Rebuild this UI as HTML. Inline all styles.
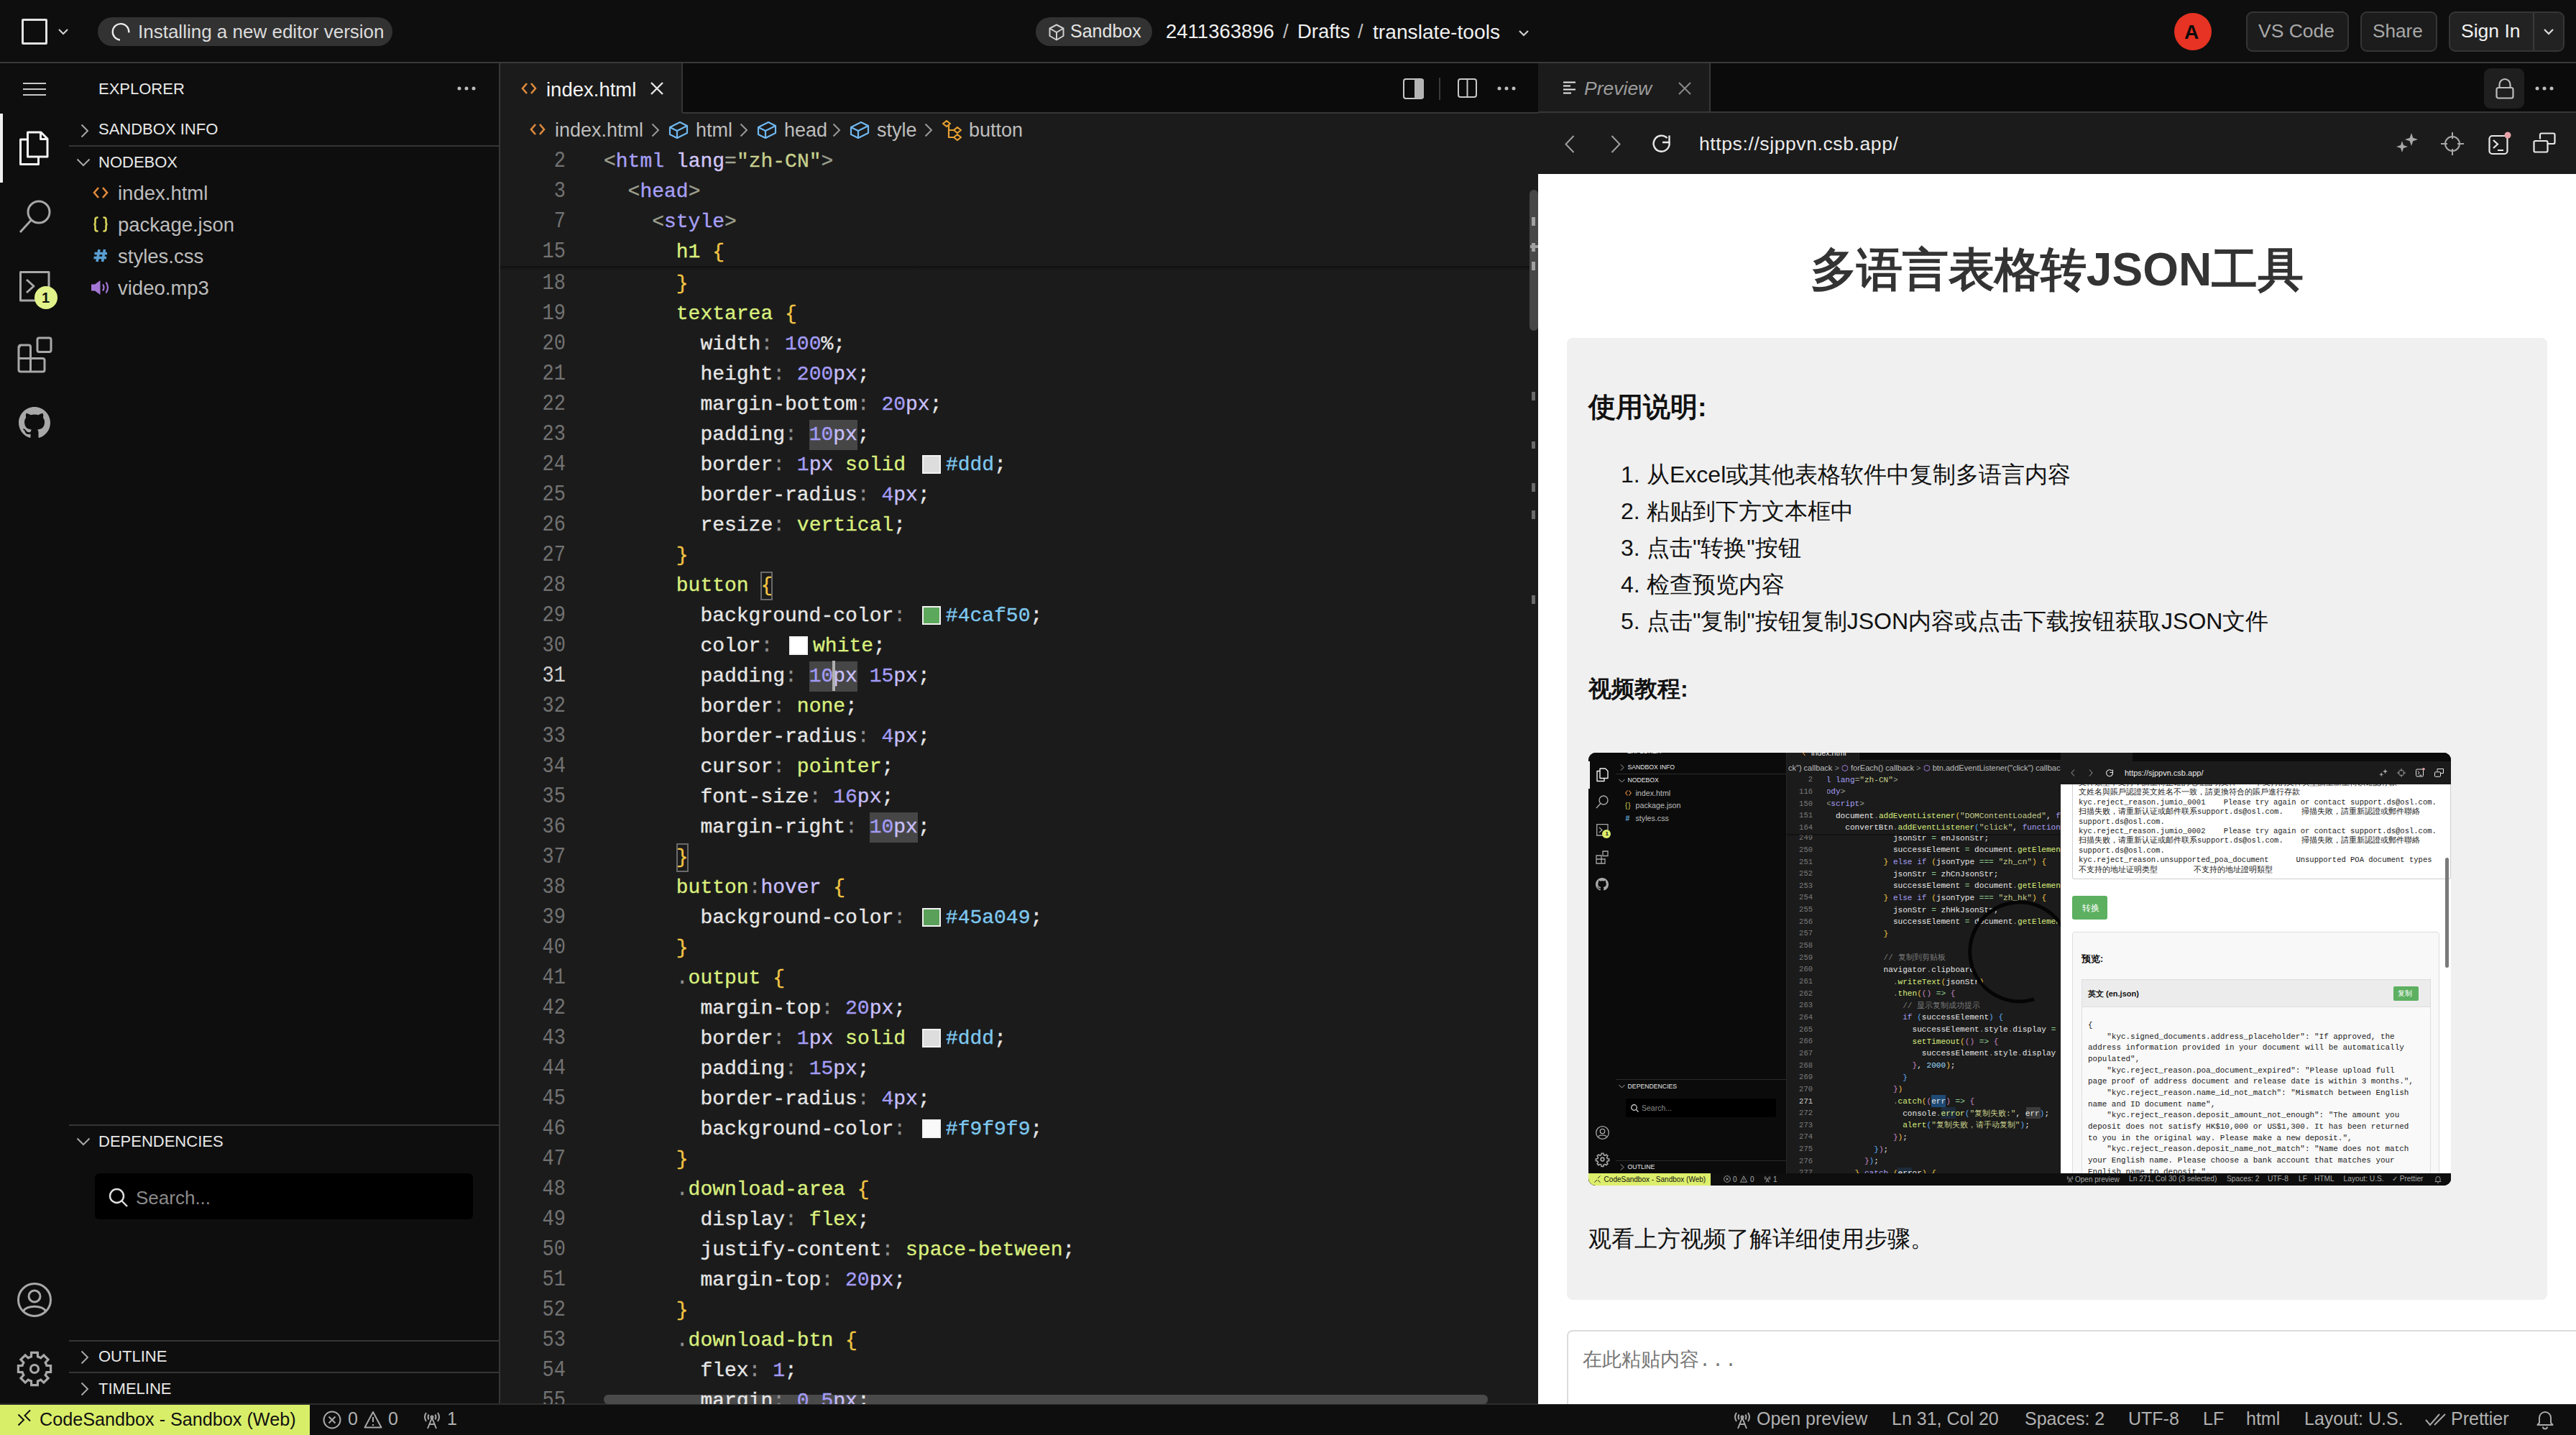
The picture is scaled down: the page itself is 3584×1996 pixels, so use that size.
<!DOCTYPE html>
<html><head><meta charset="utf-8">
<style>
*{box-sizing:border-box;margin:0;padding:0}
html,body{width:3584px;height:1996px;overflow:hidden;background:#0e0e0e;font-family:"Liberation Sans",sans-serif;color:#e6e6e6}
.a{position:absolute}
svg{position:absolute;overflow:visible}
.t{position:absolute;white-space:pre;line-height:1}
/* top bar */
#top{left:0;top:0;width:3584px;height:86px;background:#0e0e0e}
#topline{left:0;top:86px;width:3584px;height:2px;background:#3a3a3a}
.pill{position:absolute;background:#323232;border-radius:20px}
.btn{position:absolute;border:2px solid #353535;background:#1c1c1c;border-radius:9px}
/* activity */
#act{left:0;top:88px;width:96px;height:1865px;background:#0e0e0e}
/* sidebar */
#side{left:96px;top:88px;width:598px;height:1865px;background:#0e0e0e}
#sideline{left:694px;top:88px;width:2px;height:1865px;background:#363636}
.sep{position:absolute;height:2px;background:#353535}
.hdr{position:absolute;font-size:22px;color:#e8e8e8;letter-spacing:0}
.file{position:absolute;font-size:27.5px;color:#bdbdbd}
/* status */
#status{left:0;top:1952px;width:3584px;height:44px;background:#0e0e0e;border-top:2px solid #2c2c2c}
.st{position:absolute;font-size:25px;color:#b0b0b0;top:1961px;line-height:1}
/* editor */
#ed{left:696px;top:88px;width:1444px;height:1865px;background:#1b1b1b}
#tabs{left:696px;top:88px;width:1444px;height:69px;background:#0b0b0b}
.code{position:absolute;font-family:"Liberation Mono",monospace;font-size:28px;line-height:42px;white-space:pre;-webkit-text-stroke:0.35px currentColor}
.ln{position:absolute;font-family:"Liberation Mono",monospace;font-size:27px;transform:scaleY(1.13);transform-origin:50% 60%;line-height:42px;color:#727272;text-align:right;width:120px}
/* preview */
#pv{left:2140px;top:88px;width:1444px;height:1865px;background:#0b0b0b}
.pl{left:2255px;font-size:32px;color:#111}.pl b{font-weight:normal;display:inline-block;width:36px}
</style></head>
<body>
<div id="top" class="a"></div>
<div id="topline" class="a"></div>
<div id="act" class="a"></div>
<div id="side" class="a"></div>
<div id="sideline" class="a"></div>
<div id="ed" class="a"></div>
<div id="tabs" class="a"></div>
<div id="pv" class="a"></div>
<div id="status" class="a"></div>


<!-- ACTIVITY BAR -->
<svg style="left:32px;top:115px" width="32" height="20"><g stroke="#c8c8c8" stroke-width="2"><path d="M0 1H32M0 9H32M0 17H32"/></g></svg>
<div class="a" style="left:0;top:158px;width:4px;height:96px;background:#f0f0f0"></div>
<svg style="left:26px;top:182px" width="42" height="48"><g fill="none" stroke="#f4f4f4" stroke-width="3" stroke-linejoin="round"><path d="M12.5 12 H2.5 V46.5 H27.5 V36"/><path d="M12.5 2 H31 L40 11 V36 H12.5 Z"/><path d="M30.5 2 V11.5 H40"/></g></svg>
<svg style="left:26px;top:278px" width="46" height="48"><g fill="none" stroke="#a8a8a8" stroke-width="3"><circle cx="28" cy="17" r="15"/><path d="M17.5 28 L2 45"/></g></svg>
<svg style="left:27px;top:377px" width="44" height="44"><g fill="none" stroke="#a8a8a8" stroke-width="3" stroke-linejoin="round"><path d="M1.5 1.5 H41 V41 H1.5 Z"/><path d="M10 12 L20 21 L10 30"/></g></svg>
<div class="a" style="left:48px;top:398px;width:32px;height:32px;border-radius:50%;background:#e2f28a"></div>
<div class="t" style="left:58px;top:404px;font-size:20px;font-weight:bold;color:#111">1</div>
<svg style="left:24px;top:468px" width="50" height="52"><g fill="none" stroke="#a8a8a8" stroke-width="3" stroke-linejoin="round"><path d="M3.5 14 Q2 12 5 12 H16 Q18.5 12 18.5 14.5 V30.5 H35 Q38 30.5 38 33 V46.5 Q38 49 35.5 49 H5 Q2 49 2 46.5 V14 Z"/><path d="M2 30.5 H18.5 V49"/><rect x="28" y="2" width="19" height="19.5" rx="2.5"/></g></svg>
<svg style="left:26px;top:566px" width="44" height="44" viewBox="0 0 16 16"><path fill="#a8a8a8" d="M8 0C3.58 0 0 3.58 0 8c0 3.54 2.29 6.53 5.47 7.59.4.07.55-.17.55-.38 0-.19-.01-.82-.01-1.49-2.01.37-2.53-.49-2.69-.94-.09-.23-.48-.94-.82-1.13-.28-.15-.68-.52-.01-.53.63-.01 1.08.58 1.23.82.72 1.21 1.87.87 2.33.66.07-.52.28-.87.51-1.07-1.78-.2-3.64-.89-3.64-3.95 0-.87.31-1.59.82-2.15-.08-.2-.36-1.02.08-2.12 0 0 .67-.21 2.2.82.64-.18 1.32-.27 2-.27.68 0 1.36.09 2 .27 1.53-1.04 2.2-.82 2.2-.82.44 1.1.16 1.92.08 2.12.51.56.82 1.27.82 2.15 0 3.07-1.87 3.75-3.65 3.95.29.25.54.73.54 1.48 0 1.07-.01 1.93-.01 2.2 0 .21.15.46.55.38A8.013 8.013 0 0016 8c0-4.42-3.58-8-8-8z"/></svg>
<svg style="left:24px;top:1784px" width="48" height="48"><g fill="none" stroke="#a8a8a8" stroke-width="3"><circle cx="24" cy="24" r="22.5"/><circle cx="24" cy="19" r="8"/><path d="M8.5 40 C12 31 36 31 39.5 40"/></g></svg>
<svg style="left:24px;top:1880px" width="48" height="48"><g fill="none" stroke="#a8a8a8" stroke-width="3.2" stroke-linejoin="miter"><path d="M17.30 7.83 L19.47 7.10 L19.61 1.42 L28.39 1.42 L28.53 7.10 L30.70 7.83 L32.75 8.84 L36.86 4.93 L43.07 11.14 L39.16 15.25 L40.17 17.30 L40.90 19.47 L46.58 19.61 L46.58 28.39 L40.90 28.53 L40.17 30.70 L39.16 32.75 L43.07 36.86 L36.86 43.07 L32.75 39.16 L30.70 40.17 L28.53 40.90 L28.39 46.58 L19.61 46.58 L19.47 40.90 L17.30 40.17 L15.25 39.16 L11.14 43.07 L4.93 36.86 L8.84 32.75 L7.83 30.70 L7.10 28.53 L1.42 28.39 L1.42 19.61 L7.10 19.47 L7.83 17.30 L8.84 15.25 L4.93 11.14 L11.14 4.93 L15.25 8.84 Z"/><circle cx="24" cy="24" r="5.5"/></g></svg>

<!-- SIDEBAR -->
<div class="hdr" style="left:137px;top:111px">EXPLORER</div>
<svg style="left:636px;top:120px" width="26" height="6"><g fill="#bdbdbd"><circle cx="3" cy="3" r="2.5"/><circle cx="13" cy="3" r="2.5"/><circle cx="23" cy="3" r="2.5"/></g></svg>
<svg style="left:112px;top:172px" width="12" height="20"><path d="M1.5 1.5 L10 10 L1.5 18.5" fill="none" stroke="#a8a8a8" stroke-width="2"/></svg>
<div class="hdr" style="left:137px;top:167px">SANDBOX INFO</div>
<div class="sep" style="left:96px;top:202px;width:598px"></div>
<svg style="left:106px;top:220px" width="20" height="12"><path d="M1.5 1.5 L10 10 L18.5 1.5" fill="none" stroke="#a8a8a8" stroke-width="2"/></svg>
<div class="hdr" style="left:137px;top:213px">NODEBOX</div>
<svg style="left:129px;top:259px" width="22" height="18"><path d="M8 2 L2 9 L8 16 M14 2 L20 9 L14 16" fill="none" stroke="#e08a3c" stroke-width="2.6"/></svg>
<div class="file" style="left:164px;top:253px">index.html</div>
<svg style="left:129px;top:301px" width="22" height="22"><g fill="none" stroke="#d8d45a" stroke-width="2.6" stroke-linecap="round"><path d="M6.5 1.5 Q3.5 1.5 3.5 4.5 V8.5 Q3.5 11 1.5 11 Q3.5 11 3.5 13.5 V17.5 Q3.5 20.5 6.5 20.5"/><path d="M15.5 1.5 Q18.5 1.5 18.5 4.5 V8.5 Q18.5 11 20.5 11 Q18.5 11 18.5 13.5 V17.5 Q18.5 20.5 15.5 20.5"/></g></svg>
<div class="file" style="left:164px;top:297px">package.json</div>
<svg style="left:130px;top:346px" width="20" height="19"><g fill="none" stroke="#5a9fd4" stroke-width="3.6"><path d="M8 1 L5 18 M15.5 1 L12.5 18 M1.5 6.5 H19 M0.5 12.5 H18"/></g></svg>
<div class="file" style="left:164px;top:341px">styles.css</div>
<svg style="left:126px;top:389px" width="30" height="22"><path d="M1 6.5 H6 L13.5 1 V21 L6 15.5 H1 Z" fill="#a477d6"/><g fill="none" stroke="#a477d6" stroke-width="2.2"><path d="M17 6.5 Q20 11 17 15.5"/><path d="M21.5 3.5 Q26.5 11 21.5 18.5"/></g></svg>
<div class="file" style="left:164px;top:385px">video.mp3</div>

<div class="sep" style="left:96px;top:1564px;width:598px"></div>
<svg style="left:106px;top:1582px" width="20" height="12"><path d="M1.5 1.5 L10 10 L18.5 1.5" fill="none" stroke="#a8a8a8" stroke-width="2"/></svg>
<div class="hdr" style="left:137px;top:1575px">DEPENDENCIES</div>
<div class="a" style="left:132px;top:1632px;width:526px;height:64px;background:#000;border-radius:6px"></div>
<svg style="left:151px;top:1652px" width="28" height="28"><g fill="none" stroke="#e0e0e0" stroke-width="2.4"><circle cx="11.5" cy="11.5" r="9.5"/><path d="M18.5 18.5 L26 26"/></g></svg>
<div class="t" style="left:189px;top:1653px;font-size:26px;color:#8a8a8a">Search...</div>
<div class="sep" style="left:96px;top:1864px;width:598px"></div>
<svg style="left:112px;top:1878px" width="12" height="20"><path d="M1.5 1.5 L10 10 L1.5 18.5" fill="none" stroke="#a8a8a8" stroke-width="2"/></svg>
<div class="hdr" style="left:137px;top:1874px">OUTLINE</div>
<div class="sep" style="left:96px;top:1908px;width:598px"></div>
<svg style="left:112px;top:1922px" width="12" height="20"><path d="M1.5 1.5 L10 10 L1.5 18.5" fill="none" stroke="#a8a8a8" stroke-width="2"/></svg>
<div class="hdr" style="left:137px;top:1919px">TIMELINE</div>

<!-- STATUS BAR -->
<div class="a" style="left:0;top:1954px;width:431px;height:42px;background:#d9ee68"></div>
<svg style="left:24px;top:1960px" width="22" height="26"><g fill="none" stroke="#111" stroke-width="2"><path d="M1.5 7.5 L9 15 L1.5 22.5 M18 1.5 L10.5 9 L18 16.5"/></g></svg>
<div class="t" style="left:55px;top:1962px;font-size:25.2px;color:#111">CodeSandbox - Sandbox (Web)</div>
<svg style="left:449px;top:1962px" width="26" height="26"><g fill="none" stroke="#a8a8a8" stroke-width="2"><circle cx="13" cy="13" r="11.5"/><path d="M8.5 8.5 L17.5 17.5 M17.5 8.5 L8.5 17.5"/></g></svg>
<div class="st" style="left:484px">0</div>
<svg style="left:506px;top:1962px" width="26" height="26"><g fill="none" stroke="#a8a8a8" stroke-width="2" stroke-linejoin="round"><path d="M13 2 L24.5 23.5 H1.5 Z"/><path d="M13 9 V16 M13 19 V21"/></g></svg>
<div class="st" style="left:540px">0</div>
<svg style="left:588px;top:1962px" width="26" height="26"><g fill="none" stroke="#a8a8a8" stroke-width="2"><path d="M5 3 Q1 9 5 15 M21 3 Q25 9 21 15 M8.5 5.5 Q6.5 9 8.5 12.5 M17.5 5.5 Q19.5 9 17.5 12.5"/><circle cx="13" cy="9" r="1.5"/><path d="M13 10 L7 25 M13 10 L19 25 M9 19 H17"/></g></svg>
<div class="st" style="left:622px">1</div>
<svg style="left:2411px;top:1962px" width="26" height="26"><g fill="none" stroke="#a8a8a8" stroke-width="2"><path d="M5 3 Q1 9 5 15 M21 3 Q25 9 21 15 M8.5 5.5 Q6.5 9 8.5 12.5 M17.5 5.5 Q19.5 9 17.5 12.5"/><circle cx="13" cy="9" r="1.5"/><path d="M13 10 L7 25 M13 10 L19 25 M9 19 H17"/></g></svg>
<div class="st" style="left:2444px">Open preview</div>
<div class="st" style="left:2632px">Ln 31, Col 20</div>
<div class="st" style="left:2817px">Spaces: 2</div>
<div class="st" style="left:2961px">UTF-8</div>
<div class="st" style="left:3065px">LF</div>
<div class="st" style="left:3125px">html</div>
<div class="st" style="left:3206px">Layout: U.S.</div>
<svg style="left:3374px;top:1965px" width="32" height="20"><path d="M1 10 L7 17 L20 2 M13 17 L28 2" fill="none" stroke="#a8a8a8" stroke-width="2"/></svg>
<div class="st" style="left:3410px">Prettier</div>
<svg style="left:3529px;top:1961px" width="24" height="26"><path d="M4 18 V11 A8 8 0 0 1 20 11 V18 L22.5 21 H1.5 Z M9 23.5 A3 3 0 0 0 15 23.5" fill="none" stroke="#a8a8a8" stroke-width="2" stroke-linejoin="round"/></svg>



<!-- EDITOR -->
<div class="a" style="left:696px;top:88px;width:253px;height:69px;background:#1b1b1b"></div>
<div class="a" style="left:948px;top:88px;width:2px;height:69px;background:#363636"></div>
<div class="a" style="left:950px;top:156px;width:1190px;height:2px;background:#363636"></div>
<svg style="left:725px;top:114px" width="22" height="18"><path d="M8 2 L2 9 L8 16 M14 2 L20 9 L14 16" fill="none" stroke="#e08a3c" stroke-width="2.6"/></svg>
<div class="t" style="left:760px;top:111px;font-size:27.5px;color:#f4f4f4">index.html</div>
<svg style="left:905px;top:114px" width="18" height="18"><path d="M1 1 L17 17 M17 1 L1 17" fill="none" stroke="#e8e8e8" stroke-width="2.4"/></svg>
<svg style="left:1952px;top:109px" width="30" height="30"><rect x="1" y="1" width="27" height="27" rx="3" fill="none" stroke="#c8c8c8" stroke-width="2"/><rect x="16" y="1" width="13" height="27" rx="2" fill="#b4b4b4"/></svg>
<div class="a" style="left:2002px;top:108px;width:2px;height:31px;background:#3a3a3a"></div>
<svg style="left:2028px;top:109px" width="28" height="28"><rect x="1" y="1" width="25" height="25" rx="3" fill="none" stroke="#c8c8c8" stroke-width="2"/><path d="M13.5 1V26" stroke="#c8c8c8" stroke-width="2"/></svg>
<svg style="left:2083px;top:120px" width="26" height="6"><g fill="#bdbdbd"><circle cx="3" cy="3" r="2.5"/><circle cx="13" cy="3" r="2.5"/><circle cx="23" cy="3" r="2.5"/></g></svg>
<!-- breadcrumbs -->
<svg style="left:737px;top:171px" width="22" height="18"><path d="M8 2 L2 9 L8 16 M14 2 L20 9 L14 16" fill="none" stroke="#e08a3c" stroke-width="2.6"/></svg>
<div class="t" style="left:772px;top:168px;font-size:27px;color:#bdbdbd">index.html</div>
<svg style="left:906px;top:171px" width="12" height="20"><path d="M1.5 1.5 L10 10 L1.5 18.5" fill="none" stroke="#9a9a9a" stroke-width="2"/></svg>
<svg style="left:930px;top:168px" width="28" height="26"><g fill="none" stroke="#6fb8f0" stroke-width="2.2" stroke-linejoin="round"><path d="M2 9 L16 2 L26 7 L26 17 L12 24 L2 19 Z"/><path d="M2 9 L12 14 L26 7 M12 14 V24"/></g></svg>
<div class="t" style="left:968px;top:168px;font-size:27px;color:#bdbdbd">html</div>
<svg style="left:1029px;top:171px" width="12" height="20"><path d="M1.5 1.5 L10 10 L1.5 18.5" fill="none" stroke="#9a9a9a" stroke-width="2"/></svg>
<svg style="left:1053px;top:168px" width="28" height="26"><g fill="none" stroke="#6fb8f0" stroke-width="2.2" stroke-linejoin="round"><path d="M2 9 L16 2 L26 7 L26 17 L12 24 L2 19 Z"/><path d="M2 9 L12 14 L26 7 M12 14 V24"/></g></svg>
<div class="t" style="left:1091px;top:168px;font-size:27px;color:#bdbdbd">head</div>
<svg style="left:1158px;top:171px" width="12" height="20"><path d="M1.5 1.5 L10 10 L1.5 18.5" fill="none" stroke="#9a9a9a" stroke-width="2"/></svg>
<svg style="left:1182px;top:168px" width="28" height="26"><g fill="none" stroke="#6fb8f0" stroke-width="2.2" stroke-linejoin="round"><path d="M2 9 L16 2 L26 7 L26 17 L12 24 L2 19 Z"/><path d="M2 9 L12 14 L26 7 M12 14 V24"/></g></svg>
<div class="t" style="left:1220px;top:168px;font-size:27px;color:#bdbdbd">style</div>
<svg style="left:1286px;top:171px" width="12" height="20"><path d="M1.5 1.5 L10 10 L1.5 18.5" fill="none" stroke="#9a9a9a" stroke-width="2"/></svg>
<svg style="left:1310px;top:166px" width="30" height="30"><g fill="none" stroke="#e8a030" stroke-width="2.2" stroke-linejoin="round"><path d="M2 6 L7 2 L12 6 L7 10 Z"/><path d="M17 15 L22 11 L27 15 L22 19 Z"/><path d="M17 25 L22 21 L27 25 L22 29 Z"/><path d="M10 8 L10 15 L17 15 M10 15 L10 25 L17 25"/></g></svg>
<div class="t" style="left:1348px;top:168px;font-size:27px;color:#bdbdbd">button</div>
<div class="a" style="left:840px;top:1940px;width:1230px;height:13px;background:#4a4a4a;border-radius:6px"></div>
<div class="a" style="left:0;top:0;width:2140px;height:1953px;overflow:hidden"><!--CODE-->
<div class="ln" style="left:667px;top:204px;color:#727272">2</div>
<div class="code" style="left:840.0px;top:204px"><span style="color:#9ea08f">&lt;</span><span style="color:#a69ff6">html</span><span style="color:#e6e6e6"> </span><span style="color:#d2c6f8">lang</span><span style="color:#9ea08f">=</span><span style="color:#c8d08c">&quot;zh-CN&quot;</span><span style="color:#9ea08f">&gt;</span></div>
<div class="ln" style="left:667px;top:246px;color:#727272">3</div>
<div class="code" style="left:873.6px;top:246px"><span style="color:#9ea08f">&lt;</span><span style="color:#a69ff6">head</span><span style="color:#9ea08f">&gt;</span></div>
<div class="ln" style="left:667px;top:288px;color:#727272">7</div>
<div class="code" style="left:907.2px;top:288px"><span style="color:#9ea08f">&lt;</span><span style="color:#a69ff6">style</span><span style="color:#9ea08f">&gt;</span></div>
<div class="ln" style="left:667px;top:330px;color:#727272">15</div>
<div class="code" style="left:940.8px;top:330px"><span style="color:#d9ef7d">h1</span><span style="color:#e6e6e6"> </span><span style="color:#f2c443">{</span></div>
<div class="ln" style="left:667px;top:374px;color:#727272">18</div>
<div class="code" style="left:940.8px;top:374px"><span style="color:#f2c443">}</span></div>
<div class="ln" style="left:667px;top:416px;color:#727272">19</div>
<div class="code" style="left:940.8px;top:416px"><span style="color:#d9ef7d">textarea</span><span style="color:#e6e6e6"> </span><span style="color:#f2c443">{</span></div>
<div class="ln" style="left:667px;top:458px;color:#727272">20</div>
<div class="code" style="left:974.4px;top:458px"><span style="color:#e6e6e6">width</span><span style="color:#8f8f8f">:</span><span style="color:#e6e6e6"> </span><span style="color:#a39bf5">100</span><span style="color:#e6e6e6">%</span><span style="color:#e6e6e6">;</span></div>
<div class="ln" style="left:667px;top:500px;color:#727272">21</div>
<div class="code" style="left:974.4px;top:500px"><span style="color:#e6e6e6">height</span><span style="color:#8f8f8f">:</span><span style="color:#e6e6e6"> </span><span style="color:#a39bf5">200</span><span style="color:#c8bff9">px</span><span style="color:#e6e6e6">;</span></div>
<div class="ln" style="left:667px;top:542px;color:#727272">22</div>
<div class="code" style="left:974.4px;top:542px"><span style="color:#e6e6e6">margin-bottom</span><span style="color:#8f8f8f">:</span><span style="color:#e6e6e6"> </span><span style="color:#a39bf5">20</span><span style="color:#c8bff9">px</span><span style="color:#e6e6e6">;</span></div>
<div class="ln" style="left:667px;top:584px;color:#727272">23</div>
<div class="code" style="left:974.4px;top:584px"><span style="color:#e6e6e6">padding</span><span style="color:#8f8f8f">:</span><span style="color:#e6e6e6"> </span><span style="background:#464646;display:inline-block;line-height:42px"><span style="color:#a39bf5">10</span><span style="color:#c8bff9">px</span></span><span style="color:#e6e6e6">;</span></div>
<div class="ln" style="left:667px;top:626px;color:#727272">24</div>
<div class="code" style="left:974.4px;top:626px"><span style="color:#e6e6e6">border</span><span style="color:#8f8f8f">:</span><span style="color:#e6e6e6"> </span><span style="color:#a39bf5">1</span><span style="color:#c8bff9">px</span><span style="color:#e6e6e6"> </span><span style="color:#d9ef7d">solid</span><span style="color:#e6e6e6"> </span><span style="display:inline-block;width:39px;height:1px;position:relative"><i style="position:absolute;left:6px;top:-20px;width:26px;height:26px;background:#dddddd;border:2px solid #f2f2f2"></i></span><span style="color:#7ec8ee">#ddd</span><span style="color:#e6e6e6">;</span></div>
<div class="ln" style="left:667px;top:668px;color:#727272">25</div>
<div class="code" style="left:974.4px;top:668px"><span style="color:#e6e6e6">border-radius</span><span style="color:#8f8f8f">:</span><span style="color:#e6e6e6"> </span><span style="color:#a39bf5">4</span><span style="color:#c8bff9">px</span><span style="color:#e6e6e6">;</span></div>
<div class="ln" style="left:667px;top:710px;color:#727272">26</div>
<div class="code" style="left:974.4px;top:710px"><span style="color:#e6e6e6">resize</span><span style="color:#8f8f8f">:</span><span style="color:#e6e6e6"> </span><span style="color:#d9ef7d">vertical</span><span style="color:#e6e6e6">;</span></div>
<div class="ln" style="left:667px;top:752px;color:#727272">27</div>
<div class="code" style="left:940.8px;top:752px"><span style="color:#f2c443">}</span></div>
<div class="ln" style="left:667px;top:794px;color:#727272">28</div>
<div class="code" style="left:940.8px;top:794px"><span style="color:#d9ef7d">button</span><span style="color:#e6e6e6"> </span><span style="outline:2px solid #6a6a6a;outline-offset:-2px;display:inline-block;line-height:40px"><span style="color:#f2c443">{</span></span></div>
<div class="ln" style="left:667px;top:836px;color:#727272">29</div>
<div class="code" style="left:974.4px;top:836px"><span style="color:#e6e6e6">background-color</span><span style="color:#8f8f8f">:</span><span style="color:#e6e6e6"> </span><span style="display:inline-block;width:39px;height:1px;position:relative"><i style="position:absolute;left:6px;top:-20px;width:26px;height:26px;background:#5ca85c;border:2px solid #f2f2f2"></i></span><span style="color:#7ec8ee">#4caf50</span><span style="color:#e6e6e6">;</span></div>
<div class="ln" style="left:667px;top:878px;color:#727272">30</div>
<div class="code" style="left:974.4px;top:878px"><span style="color:#e6e6e6">color</span><span style="color:#8f8f8f">:</span><span style="color:#e6e6e6"> </span><span style="display:inline-block;width:39px;height:1px;position:relative"><i style="position:absolute;left:6px;top:-20px;width:26px;height:26px;background:#ffffff;border:2px solid #f2f2f2"></i></span><span style="color:#d9ef7d">white</span><span style="color:#e6e6e6">;</span></div>
<div class="ln" style="left:667px;top:920px;color:#cfcfcf">31</div>
<div class="code" style="left:974.4px;top:920px"><span style="color:#e6e6e6">padding</span><span style="color:#8f8f8f">:</span><span style="color:#e6e6e6"> </span><span style="background:#464646;display:inline-block;line-height:42px"><span style="color:#a39bf5">10</span><span style="color:#c8bff9">px</span></span><span style="color:#e6e6e6"> </span><span style="color:#a39bf5">15</span><span style="color:#c8bff9">px</span><span style="color:#e6e6e6">;</span></div>
<div class="ln" style="left:667px;top:962px;color:#727272">32</div>
<div class="code" style="left:974.4px;top:962px"><span style="color:#e6e6e6">border</span><span style="color:#8f8f8f">:</span><span style="color:#e6e6e6"> </span><span style="color:#d9ef7d">none</span><span style="color:#e6e6e6">;</span></div>
<div class="ln" style="left:667px;top:1004px;color:#727272">33</div>
<div class="code" style="left:974.4px;top:1004px"><span style="color:#e6e6e6">border-radius</span><span style="color:#8f8f8f">:</span><span style="color:#e6e6e6"> </span><span style="color:#a39bf5">4</span><span style="color:#c8bff9">px</span><span style="color:#e6e6e6">;</span></div>
<div class="ln" style="left:667px;top:1046px;color:#727272">34</div>
<div class="code" style="left:974.4px;top:1046px"><span style="color:#e6e6e6">cursor</span><span style="color:#8f8f8f">:</span><span style="color:#e6e6e6"> </span><span style="color:#d9ef7d">pointer</span><span style="color:#e6e6e6">;</span></div>
<div class="ln" style="left:667px;top:1088px;color:#727272">35</div>
<div class="code" style="left:974.4px;top:1088px"><span style="color:#e6e6e6">font-size</span><span style="color:#8f8f8f">:</span><span style="color:#e6e6e6"> </span><span style="color:#a39bf5">16</span><span style="color:#c8bff9">px</span><span style="color:#e6e6e6">;</span></div>
<div class="ln" style="left:667px;top:1130px;color:#727272">36</div>
<div class="code" style="left:974.4px;top:1130px"><span style="color:#e6e6e6">margin-right</span><span style="color:#8f8f8f">:</span><span style="color:#e6e6e6"> </span><span style="background:#464646;display:inline-block;line-height:42px"><span style="color:#a39bf5">10</span><span style="color:#c8bff9">px</span></span><span style="color:#e6e6e6">;</span></div>
<div class="ln" style="left:667px;top:1172px;color:#727272">37</div>
<div class="code" style="left:940.8px;top:1172px"><span style="outline:2px solid #6a6a6a;outline-offset:-2px;display:inline-block;line-height:40px"><span style="color:#f2c443">}</span></span></div>
<div class="ln" style="left:667px;top:1214px;color:#727272">38</div>
<div class="code" style="left:940.8px;top:1214px"><span style="color:#d9ef7d">button</span><span style="color:#8f8f8f">:</span><span style="color:#c8bff9">hover</span><span style="color:#e6e6e6"> </span><span style="color:#f2c443">{</span></div>
<div class="ln" style="left:667px;top:1256px;color:#727272">39</div>
<div class="code" style="left:974.4px;top:1256px"><span style="color:#e6e6e6">background-color</span><span style="color:#8f8f8f">:</span><span style="color:#e6e6e6"> </span><span style="display:inline-block;width:39px;height:1px;position:relative"><i style="position:absolute;left:6px;top:-20px;width:26px;height:26px;background:#5aa05a;border:2px solid #f2f2f2"></i></span><span style="color:#7ec8ee">#45a049</span><span style="color:#e6e6e6">;</span></div>
<div class="ln" style="left:667px;top:1298px;color:#727272">40</div>
<div class="code" style="left:940.8px;top:1298px"><span style="color:#f2c443">}</span></div>
<div class="ln" style="left:667px;top:1340px;color:#727272">41</div>
<div class="code" style="left:940.8px;top:1340px"><span style="color:#8f8f8f">.</span><span style="color:#d9ef7d">output</span><span style="color:#e6e6e6"> </span><span style="color:#f2c443">{</span></div>
<div class="ln" style="left:667px;top:1382px;color:#727272">42</div>
<div class="code" style="left:974.4px;top:1382px"><span style="color:#e6e6e6">margin-top</span><span style="color:#8f8f8f">:</span><span style="color:#e6e6e6"> </span><span style="color:#a39bf5">20</span><span style="color:#c8bff9">px</span><span style="color:#e6e6e6">;</span></div>
<div class="ln" style="left:667px;top:1424px;color:#727272">43</div>
<div class="code" style="left:974.4px;top:1424px"><span style="color:#e6e6e6">border</span><span style="color:#8f8f8f">:</span><span style="color:#e6e6e6"> </span><span style="color:#a39bf5">1</span><span style="color:#c8bff9">px</span><span style="color:#e6e6e6"> </span><span style="color:#d9ef7d">solid</span><span style="color:#e6e6e6"> </span><span style="display:inline-block;width:39px;height:1px;position:relative"><i style="position:absolute;left:6px;top:-20px;width:26px;height:26px;background:#dddddd;border:2px solid #f2f2f2"></i></span><span style="color:#7ec8ee">#ddd</span><span style="color:#e6e6e6">;</span></div>
<div class="ln" style="left:667px;top:1466px;color:#727272">44</div>
<div class="code" style="left:974.4px;top:1466px"><span style="color:#e6e6e6">padding</span><span style="color:#8f8f8f">:</span><span style="color:#e6e6e6"> </span><span style="color:#a39bf5">15</span><span style="color:#c8bff9">px</span><span style="color:#e6e6e6">;</span></div>
<div class="ln" style="left:667px;top:1508px;color:#727272">45</div>
<div class="code" style="left:974.4px;top:1508px"><span style="color:#e6e6e6">border-radius</span><span style="color:#8f8f8f">:</span><span style="color:#e6e6e6"> </span><span style="color:#a39bf5">4</span><span style="color:#c8bff9">px</span><span style="color:#e6e6e6">;</span></div>
<div class="ln" style="left:667px;top:1550px;color:#727272">46</div>
<div class="code" style="left:974.4px;top:1550px"><span style="color:#e6e6e6">background-color</span><span style="color:#8f8f8f">:</span><span style="color:#e6e6e6"> </span><span style="display:inline-block;width:39px;height:1px;position:relative"><i style="position:absolute;left:6px;top:-20px;width:26px;height:26px;background:#f9f9f9;border:2px solid #f2f2f2"></i></span><span style="color:#7ec8ee">#f9f9f9</span><span style="color:#e6e6e6">;</span></div>
<div class="ln" style="left:667px;top:1592px;color:#727272">47</div>
<div class="code" style="left:940.8px;top:1592px"><span style="color:#f2c443">}</span></div>
<div class="ln" style="left:667px;top:1634px;color:#727272">48</div>
<div class="code" style="left:940.8px;top:1634px"><span style="color:#8f8f8f">.</span><span style="color:#d9ef7d">download-area</span><span style="color:#e6e6e6"> </span><span style="color:#f2c443">{</span></div>
<div class="ln" style="left:667px;top:1676px;color:#727272">49</div>
<div class="code" style="left:974.4px;top:1676px"><span style="color:#e6e6e6">display</span><span style="color:#8f8f8f">:</span><span style="color:#e6e6e6"> </span><span style="color:#d9ef7d">flex</span><span style="color:#e6e6e6">;</span></div>
<div class="ln" style="left:667px;top:1718px;color:#727272">50</div>
<div class="code" style="left:974.4px;top:1718px"><span style="color:#e6e6e6">justify-content</span><span style="color:#8f8f8f">:</span><span style="color:#e6e6e6"> </span><span style="color:#d9ef7d">space-between</span><span style="color:#e6e6e6">;</span></div>
<div class="ln" style="left:667px;top:1760px;color:#727272">51</div>
<div class="code" style="left:974.4px;top:1760px"><span style="color:#e6e6e6">margin-top</span><span style="color:#8f8f8f">:</span><span style="color:#e6e6e6"> </span><span style="color:#a39bf5">20</span><span style="color:#c8bff9">px</span><span style="color:#e6e6e6">;</span></div>
<div class="ln" style="left:667px;top:1802px;color:#727272">52</div>
<div class="code" style="left:940.8px;top:1802px"><span style="color:#f2c443">}</span></div>
<div class="ln" style="left:667px;top:1844px;color:#727272">53</div>
<div class="code" style="left:940.8px;top:1844px"><span style="color:#8f8f8f">.</span><span style="color:#d9ef7d">download-btn</span><span style="color:#e6e6e6"> </span><span style="color:#f2c443">{</span></div>
<div class="ln" style="left:667px;top:1886px;color:#727272">54</div>
<div class="code" style="left:974.4px;top:1886px"><span style="color:#e6e6e6">flex</span><span style="color:#8f8f8f">:</span><span style="color:#e6e6e6"> </span><span style="color:#a39bf5">1</span><span style="color:#e6e6e6">;</span></div>
<div class="ln" style="left:667px;top:1928px;color:#727272">55</div>
<div class="code" style="left:974.4px;top:1928px"><span style="color:#e6e6e6">margin</span><span style="color:#8f8f8f">:</span><span style="color:#e6e6e6"> </span><span style="color:#a39bf5">0</span><span style="color:#e6e6e6"> </span><span style="color:#a39bf5">5</span><span style="color:#c8bff9">px</span><span style="color:#e6e6e6">;</span></div>
<div class="a" style="left:1158px;top:919px;width:4px;height:42px;background:#b0b0b0"></div>
<!--/CODE--></div>
<!-- sticky shadow -->
<div class="a" style="left:696px;top:370px;width:1432px;height:6px;background:linear-gradient(#101010,rgba(27,27,27,0))"></div>
<!-- scrollbar -->
<div class="a" style="left:2128px;top:264px;width:12px;height:196px;background:#474747;border-radius:6px"></div>
<div class="a" style="left:2131px;top:302px;width:5px;height:12px;background:#a0a0a0"></div>
<div class="a" style="left:2129px;top:341px;width:12px;height:4px;background:#a0a0a0"></div>
<div class="a" style="left:2131px;top:338px;width:5px;height:12px;background:#a0a0a0"></div>
<div class="a" style="left:2131px;top:364px;width:5px;height:12px;background:#a0a0a0"></div>
<div class="a" style="left:2131px;top:545px;width:5px;height:12px;background:#6a6a6a"></div>
<div class="a" style="left:2131px;top:614px;width:5px;height:10px;background:#6a6a6a"></div>
<div class="a" style="left:2131px;top:672px;width:5px;height:12px;background:#6a6a6a"></div>
<div class="a" style="left:2131px;top:710px;width:5px;height:12px;background:#6a6a6a"></div>
<div class="a" style="left:2131px;top:828px;width:5px;height:12px;background:#6a6a6a"></div>
<!-- h scrollbar -->



<!-- PREVIEW -->
<div class="a" style="left:2140px;top:88px;width:239px;height:69px;background:#1b1b1b"></div>
<div class="a" style="left:2378px;top:88px;width:2px;height:69px;background:#363636"></div>
<div class="a" style="left:2140px;top:155px;width:1444px;height:2px;background:#363636"></div>
<svg style="left:2175px;top:113px" width="18" height="19"><g stroke="#e8e8e8" stroke-width="2.2"><path d="M0 1.5H17M0 6.5H10M0 11.5H17M0 16.5H11"/></g></svg>
<div class="t" style="left:2204px;top:110px;font-size:26.5px;font-style:italic;color:#9c9c9c">Preview</div>
<svg style="left:2335px;top:114px" width="18" height="18"><path d="M1 1 L17 17 M17 1 L1 17" fill="none" stroke="#8a8a8a" stroke-width="2"/></svg>
<div class="a" style="left:3456px;top:95px;width:56px;height:56px;background:#1f1f1f;border-radius:9px"></div>
<svg style="left:3472px;top:109px" width="26" height="29"><g fill="none" stroke="#bdbdbd" stroke-width="2.2"><rect x="1.5" y="13" width="23" height="14.5" rx="2.5"/><path d="M5.5 13 V8.5 A7.5 7.5 0 0 1 20.5 8.5 V13"/></g></svg>
<svg style="left:3527px;top:120px" width="26" height="6"><g fill="#bdbdbd"><circle cx="3" cy="3" r="2.5"/><circle cx="13" cy="3" r="2.5"/><circle cx="23" cy="3" r="2.5"/></g></svg>
<div class="a" style="left:2140px;top:157px;width:1444px;height:85px;background:#1b1b1b"></div>
<svg style="left:2177px;top:188px" width="14" height="25"><path d="M12.5 1 L1.5 12.5 L12.5 24" fill="none" stroke="#a0a0a0" stroke-width="2"/></svg>
<svg style="left:2241px;top:188px" width="14" height="25"><path d="M1.5 1 L12.5 12.5 L1.5 24" fill="none" stroke="#a0a0a0" stroke-width="2"/></svg>
<svg style="left:2299px;top:187px" width="28" height="27"><g fill="none" stroke="#e8e8e8" stroke-width="2.4"><path d="M23.5 11 A11 11 0 1 1 20.5 5"/><path d="M23.5 1.5 V11 H14"/></g></svg>
<div class="t" style="left:2364px;top:187px;font-size:26.5px;color:#ececec;letter-spacing:0.6px">https://sjppvn.csb.app/</div>
<svg style="left:3334px;top:184px" width="30" height="30"><g fill="#a8a8a8"><path d="M21 1 L23.3 7.7 L30 10 L23.3 12.3 L21 19 L18.7 12.3 L12 10 L18.7 7.7 Z"/><path d="M8 12 L10 18 L16 20 L10 22 L8 28 L6 22 L0 20 L6 18 Z"/></g></svg>
<svg style="left:3396px;top:184px" width="32" height="32"><g fill="none" stroke="#a8a8a8" stroke-width="2"><circle cx="16" cy="16" r="10"/><path d="M16 0 V9 M16 23 V32 M0 16 H9 M23 16 H32"/></g></svg>
<svg style="left:3462px;top:184px" width="32" height="32"><g fill="none" stroke="#e8e8e8" stroke-width="2.2"><rect x="1.5" y="5" width="25" height="25" rx="4"/><path d="M7 11 L13 16.5 L7 22 M13 25 H21"/></g><circle cx="27" cy="4" r="4.5" fill="#e8a3a8"/></svg>
<svg style="left:3524px;top:184px" width="32" height="30"><g fill="none" stroke="#e8e8e8" stroke-width="2.2" stroke-linejoin="round"><path d="M10 9.5 V3 A2 2 0 0 1 12 1.5 H28.5 A2 2 0 0 1 30.5 3.5 V14 A2 2 0 0 1 28.5 16 H21"/><rect x="1.5" y="12" width="19" height="15.5" rx="2"/></g></svg>
<!-- content -->
<div class="a" style="left:2140px;top:242px;width:1444px;height:1711px;background:#fff"></div>
<div class="t" style="left:2140px;width:1444px;text-align:center;top:343px;font-size:64px;font-weight:bold;color:#333">多语言表格转JSON工具</div>
<div class="a" style="left:2180px;top:470px;width:1364px;height:1338px;background:#f0f0f0;border-radius:8px"></div>
<div class="t" style="left:2210px;top:548px;font-size:37.5px;font-weight:bold;color:#111">使用说明:</div>
<div class="t pl" style="top:644px"><b>1.</b>从Excel或其他表格软件中复制多语言内容</div>
<div class="t pl" style="top:695px"><b>2.</b>粘贴到下方文本框中</div>
<div class="t pl" style="top:746px"><b>3.</b>点击"转换"按钮</div>
<div class="t pl" style="top:797px"><b>4.</b>检查预览内容</div>
<div class="t pl" style="top:848px"><b>5.</b>点击"复制"按钮复制JSON内容或点击下载按钮获取JSON文件</div>
<div class="t" style="left:2210px;top:942px;font-size:32px;font-weight:bold;color:#111">视频教程:</div>
<div class="a" id="vid" style="left:2210px;top:1047px;width:1200px;height:602px;background:#0b0b0b;border-radius:10px;overflow:hidden">
<!--VID-->
<div class="a" style="left:0px;top:0px;width:1200px;height:602px;background:#0b0b0b;"></div>
<div class="a" style="left:0px;top:12px;width:2px;height:38px;background:#f0f0f0;"></div>
<svg style="left:11px;top:21px" width="16" height="19"><g fill="none" stroke="#f0f0f0" stroke-width="1.4" stroke-linejoin="round"><path d="M5 4.5H1V18.5H11V14"/><path d="M5 1H12.5L16 4.5V14.5H5Z"/></g></svg>
<svg style="left:10px;top:59px" width="18" height="19"><g fill="none" stroke="#a8a8a8" stroke-width="1.4"><circle cx="11" cy="7" r="6"/><path d="M7 11.5L1 18"/></g></svg>
<svg style="left:11px;top:99px" width="17" height="17"><g fill="none" stroke="#a8a8a8" stroke-width="1.3"><path d="M0.7 0.7H16V16H0.7Z"/><path d="M4 5L8 8.5L4 12"/></g></svg>
<div class="a" style="left:19px;top:107px;width:12px;height:12px;background:#dcee6b;border-radius:50%"></div>
<div class="t" style="left:23.5px;top:109.0px;font-size:8px;color:#111;font-weight:bold">1</div>
<svg style="left:10px;top:136px" width="18" height="19"><g fill="none" stroke="#a8a8a8" stroke-width="1.3"><path d="M1 7H8V18H1ZM1 12H13V18H8"/><path d="M10 1H17V7.5H10Z"/></g></svg>
<svg style="left:10px;top:174px" width="18" height="18" viewBox="0 0 16 16"><path fill="#a8a8a8" d="M8 0C3.58 0 0 3.58 0 8c0 3.54 2.29 6.53 5.47 7.59.4.07.55-.17.55-.38 0-.19-.01-.82-.01-1.49-2.01.37-2.530-.49-2.69-.94-.09-.23-.48-.94-.82-1.13-.28-.15-.68-.52-.01-.53.63-.01 1.08.58 1.23.82.72 1.21 1.87.87 2.33.66.07-.52.28-.87.51-1.07-1.780-.2-3.64-.89-3.64-3.95 0-.87.31-1.59.82-2.15-.08-.2-.36-1.02.08-2.12 0 0 .67-.21 2.2.82.64-.18 1.32-.27 2-.27.68 0 1.36.09 2 .27 1.53-1.04 2.2-.82 2.2-.82.44 1.1.16 1.92.08 2.12.51.56.82 1.27.82 2.15 0 3.07-1.87 3.75-3.65 3.95.29.25.54.73.54 1.48 0 1.07-.01 1.93-.01 2.2 0 .21.15.46.55.38A8.013 8.013 0 0016 8c0-4.42-3.58-8-8-8z"/></svg>
<svg style="left:10px;top:519px" width="19" height="19"><g fill="none" stroke="#a8a8a8" stroke-width="1.3"><circle cx="9.5" cy="9.5" r="8.8"/><circle cx="9.5" cy="7.5" r="3.2"/><path d="M3.5 15.5C5 12 14 12 15.5 15.5"/></g></svg>
<svg style="left:10px;top:556px" width="19" height="19" viewBox="0 0 24 24"><g fill="none" stroke="#a8a8a8" stroke-width="2"><path d="M10.3 1.5h3.4l.6 3 2 .9 2.6-1.7 2.4 2.4-1.7 2.6.9 2 3 .6v3.4l-3 .6-.9 2 1.7 2.6-2.4 2.4-2.6-1.7-2 .9-.6 3h-3.4l-.6-3-2-.9-2.6 1.7-2.4-2.4 1.7-2.6-.9-2-3-.6v-3.4l3-.6.9-2-1.7-2.6 2.4-2.4 2.6 1.7 2-.9z"/><circle cx="12" cy="12" r="3"/></g></svg>
<div class="t" style="left:54px;top:-6.3px;font-size:8.7px;color:#e8e8e8;">EXPLORER</div>
<svg style="left:44px;top:16px" width="6" height="9"><path d="M1 0.5L5 4.5L1 8.5" fill="none" stroke="#a8a8a8" stroke-width="1"/></svg>
<div class="t" style="left:54.4px;top:16.2px;font-size:8.7px;color:#e8e8e8;">SANDBOX INFO</div>
<div class="a" style="left:38px;top:29px;width:237px;height:1px;background:#2a2a2a;"></div>
<svg style="left:42px;top:36px" width="9" height="6"><path d="M0.5 1L4.5 5L8.5 1" fill="none" stroke="#a8a8a8" stroke-width="1"/></svg>
<div class="t" style="left:54.4px;top:34.2px;font-size:8.7px;color:#e8e8e8;">NODEBOX</div>
<svg style="left:51px;top:52px" width="9" height="8"><path d="M3.5 0.5L0.8 4L3.5 7.5M5.5 0.5L8.2 4L5.5 7.5" fill="none" stroke="#e08a3c" stroke-width="1.2"/></svg>
<div class="t" style="left:65.5px;top:50.6px;font-size:10.7px;color:#bdbdbd;">index.html</div>
<div class="t" style="left:51px;top:68.5px;font-size:10px;color:#d6d24a;letter-spacing:1px">{}</div>
<div class="t" style="left:65.5px;top:68.2px;font-size:10.7px;color:#bdbdbd;">package.json</div>
<div class="t" style="left:51.5px;top:85.8px;font-size:10.5px;color:#5da2d0;font-weight:bold">#</div>
<div class="t" style="left:65.5px;top:85.7px;font-size:10.7px;color:#bdbdbd;">styles.css</div>
<div class="a" style="left:38px;top:454px;width:237px;height:1px;background:#2a2a2a;"></div>
<svg style="left:42px;top:461px" width="9" height="6"><path d="M0.5 1L4.5 5L8.5 1" fill="none" stroke="#a8a8a8" stroke-width="1"/></svg>
<div class="t" style="left:54.6px;top:459.6px;font-size:8.7px;color:#e8e8e8;">DEPENDENCIES</div>
<div class="a" style="left:52px;top:481px;width:209px;height:26px;background:#000;border-radius:3px"></div>
<svg style="left:59px;top:489px" width="11" height="11"><g fill="none" stroke="#e0e0e0" stroke-width="1.2"><circle cx="4.5" cy="4.5" r="3.8"/><path d="M7.3 7.3L10.5 10.5"/></g></svg>
<div class="t" style="left:74px;top:488.8px;font-size:10.5px;color:#8a8a8a;">Search...</div>
<div class="a" style="left:38px;top:567px;width:237px;height:1px;background:#2a2a2a;"></div>
<svg style="left:44px;top:572px" width="6" height="9"><path d="M1 0.5L5 4.5L1 8.5" fill="none" stroke="#a8a8a8" stroke-width="1"/></svg>
<div class="t" style="left:54.6px;top:571.9px;font-size:8.7px;color:#e8e8e8;">OUTLINE</div>
<div class="a" style="left:275px;top:0px;width:1px;height:585px;background:#262626;"></div>
<div class="a" style="left:276px;top:0px;width:381px;height:585px;background:#1b1b1b;"></div>
<div class="a" style="left:276px;top:0px;width:381px;height:11px;background:#0b0b0b;"></div>
<div class="a" style="left:276px;top:0px;width:100px;height:11px;background:#1b1b1b;"></div>
<div class="a" style="left:376px;top:0px;width:1px;height:11px;background:#262626;"></div>
<div class="a" style="left:377px;top:10px;width:280px;height:1px;background:#262626;"></div>
<div class="t" style="left:310px;top:-5.3px;font-size:10.7px;color:#f0f0f0;">index.html</div>
<svg style="left:298px;top:0px" width="9" height="5"><path d="M3.5 -3L0.8 0.5L3.5 4" fill="none" stroke="#e08a3c" stroke-width="1.2"/></svg>
<div class="a" style="left:276px;top:11px;width:381px;height:20px;overflow:hidden">
<div class="t" style="left:2px;top:4.5px;font-size:11px;color:#bdbdbd">ck&quot;) callback <span style="color:#888">&gt;</span> <span style="color:#b48ef0">&#x2B21;</span> forEach() callback <span style="color:#888">&gt;</span> <span style="color:#b48ef0">&#x2B21;</span> btn.addEventListener(&quot;click&quot;) callback</div>
</div>
<div class="a" style="left:276px;top:31px;width:381px;height:554px;overflow:hidden">
<div class="a" style="left:201.3px;top:445px;width:19.7px;height:16.5px;background:#1f4a75;"></div>
<div class="a" style="left:333px;top:461.5px;width:19.7px;height:16.3px;background:#3c3c3c;"></div>
<div class="a" style="left:214.5px;top:461.5px;width:20px;height:16px;background:#1d2b3a;"></div>
<div class="a" style="left:154px;top:545.6px;width:20px;height:16px;background:#1d2b3a;"></div>
<div class="t" style="left:0;width:36px;text-align:right;top:82.2px;font-family:'Liberation Mono',monospace;font-size:10.5px;color:#7b7b7b">249</div>
<div class="a" style="left:56px;top:79.7px;width:325px;height:18px;overflow:hidden"><div class="t" style="left:91.88px;top:3px;font-family:'Liberation Mono',monospace;font-size:11.1px"><span style="color:#e6e6e6">jsonStr </span><span style="color:#8fcf8f">=</span><span style="color:#e6e6e6"> enJsonStr;</span></div></div>
<div class="t" style="left:0;width:36px;text-align:right;top:98.9px;font-family:'Liberation Mono',monospace;font-size:10.5px;color:#7b7b7b">250</div>
<div class="a" style="left:56px;top:96.4px;width:325px;height:18px;overflow:hidden"><div class="t" style="left:91.88px;top:3px;font-family:'Liberation Mono',monospace;font-size:11.1px"><span style="color:#e6e6e6">successElement </span><span style="color:#8fcf8f">=</span><span style="color:#e6e6e6"> document</span><span style="color:#8f8f8f">.</span><span style="color:#d9ef7d">getElementById</span></div></div>
<div class="t" style="left:0;width:36px;text-align:right;top:115.5px;font-family:'Liberation Mono',monospace;font-size:10.5px;color:#7b7b7b">251</div>
<div class="a" style="left:56px;top:113.0px;width:325px;height:18px;overflow:hidden"><div class="t" style="left:78.56px;top:3px;font-family:'Liberation Mono',monospace;font-size:11.1px"><span style="color:#f2c443">}</span><span style="color:#e6e6e6"> </span><span style="color:#a69ff6">else if</span><span style="color:#e6e6e6"> </span><span style="color:#f2c443">(</span><span style="color:#e6e6e6">jsonType </span><span style="color:#8fcf8f">===</span><span style="color:#e6e6e6"> </span><span style="color:#c8d08c">&quot;zh_cn&quot;</span><span style="color:#f2c443">)</span><span style="color:#e6e6e6"> </span><span style="color:#f2c443">{</span></div></div>
<div class="t" style="left:0;width:36px;text-align:right;top:132.1px;font-family:'Liberation Mono',monospace;font-size:10.5px;color:#7b7b7b">252</div>
<div class="a" style="left:56px;top:129.6px;width:325px;height:18px;overflow:hidden"><div class="t" style="left:91.88px;top:3px;font-family:'Liberation Mono',monospace;font-size:11.1px"><span style="color:#e6e6e6">jsonStr </span><span style="color:#8fcf8f">=</span><span style="color:#e6e6e6"> zhCnJsonStr;</span></div></div>
<div class="t" style="left:0;width:36px;text-align:right;top:148.8px;font-family:'Liberation Mono',monospace;font-size:10.5px;color:#7b7b7b">253</div>
<div class="a" style="left:56px;top:146.3px;width:325px;height:18px;overflow:hidden"><div class="t" style="left:91.88px;top:3px;font-family:'Liberation Mono',monospace;font-size:11.1px"><span style="color:#e6e6e6">successElement </span><span style="color:#8fcf8f">=</span><span style="color:#e6e6e6"> document</span><span style="color:#8f8f8f">.</span><span style="color:#d9ef7d">getElementById</span></div></div>
<div class="t" style="left:0;width:36px;text-align:right;top:165.4px;font-family:'Liberation Mono',monospace;font-size:10.5px;color:#7b7b7b">254</div>
<div class="a" style="left:56px;top:162.9px;width:325px;height:18px;overflow:hidden"><div class="t" style="left:78.56px;top:3px;font-family:'Liberation Mono',monospace;font-size:11.1px"><span style="color:#f2c443">}</span><span style="color:#e6e6e6"> </span><span style="color:#a69ff6">else if</span><span style="color:#e6e6e6"> </span><span style="color:#f2c443">(</span><span style="color:#e6e6e6">jsonType </span><span style="color:#8fcf8f">===</span><span style="color:#e6e6e6"> </span><span style="color:#c8d08c">&quot;zh_hk&quot;</span><span style="color:#f2c443">)</span><span style="color:#e6e6e6"> </span><span style="color:#f2c443">{</span></div></div>
<div class="t" style="left:0;width:36px;text-align:right;top:182.1px;font-family:'Liberation Mono',monospace;font-size:10.5px;color:#7b7b7b">255</div>
<div class="a" style="left:56px;top:179.6px;width:325px;height:18px;overflow:hidden"><div class="t" style="left:91.88px;top:3px;font-family:'Liberation Mono',monospace;font-size:11.1px"><span style="color:#e6e6e6">jsonStr </span><span style="color:#8fcf8f">=</span><span style="color:#e6e6e6"> zhHkJsonStr;</span></div></div>
<div class="t" style="left:0;width:36px;text-align:right;top:198.7px;font-family:'Liberation Mono',monospace;font-size:10.5px;color:#7b7b7b">256</div>
<div class="a" style="left:56px;top:196.2px;width:325px;height:18px;overflow:hidden"><div class="t" style="left:91.88px;top:3px;font-family:'Liberation Mono',monospace;font-size:11.1px"><span style="color:#e6e6e6">successElement </span><span style="color:#8fcf8f">=</span><span style="color:#e6e6e6"> document</span><span style="color:#8f8f8f">.</span><span style="color:#d9ef7d">getElementById</span></div></div>
<div class="t" style="left:0;width:36px;text-align:right;top:215.4px;font-family:'Liberation Mono',monospace;font-size:10.5px;color:#7b7b7b">257</div>
<div class="a" style="left:56px;top:212.9px;width:325px;height:18px;overflow:hidden"><div class="t" style="left:78.56px;top:3px;font-family:'Liberation Mono',monospace;font-size:11.1px"><span style="color:#f2c443">}</span></div></div>
<div class="t" style="left:0;width:36px;text-align:right;top:232.1px;font-family:'Liberation Mono',monospace;font-size:10.5px;color:#7b7b7b">258</div>
<div class="a" style="left:56px;top:229.6px;width:325px;height:18px;overflow:hidden"><div class="t" style="left:-28.00px;top:3px;font-family:'Liberation Mono',monospace;font-size:11.1px"></div></div>
<div class="t" style="left:0;width:36px;text-align:right;top:248.7px;font-family:'Liberation Mono',monospace;font-size:10.5px;color:#7b7b7b">259</div>
<div class="a" style="left:56px;top:246.2px;width:325px;height:18px;overflow:hidden"><div class="t" style="left:78.56px;top:3px;font-family:'Liberation Mono',monospace;font-size:11.1px"><span style="color:#7a7a7a">// 复制到剪贴板</span></div></div>
<div class="t" style="left:0;width:36px;text-align:right;top:265.3px;font-family:'Liberation Mono',monospace;font-size:10.5px;color:#7b7b7b">260</div>
<div class="a" style="left:56px;top:262.8px;width:325px;height:18px;overflow:hidden"><div class="t" style="left:78.56px;top:3px;font-family:'Liberation Mono',monospace;font-size:11.1px"><span style="color:#e6e6e6">navigator</span><span style="color:#8f8f8f">.</span><span style="color:#e6e6e6">clipboard</span></div></div>
<div class="t" style="left:0;width:36px;text-align:right;top:282.0px;font-family:'Liberation Mono',monospace;font-size:10.5px;color:#7b7b7b">261</div>
<div class="a" style="left:56px;top:279.5px;width:325px;height:18px;overflow:hidden"><div class="t" style="left:91.88px;top:3px;font-family:'Liberation Mono',monospace;font-size:11.1px"><span style="color:#8f8f8f">.</span><span style="color:#d9ef7d">writeText</span><span style="color:#f2c443">(</span><span style="color:#e6e6e6">jsonStr</span><span style="color:#f2c443">)</span></div></div>
<div class="t" style="left:0;width:36px;text-align:right;top:298.6px;font-family:'Liberation Mono',monospace;font-size:10.5px;color:#7b7b7b">262</div>
<div class="a" style="left:56px;top:296.1px;width:325px;height:18px;overflow:hidden"><div class="t" style="left:91.88px;top:3px;font-family:'Liberation Mono',monospace;font-size:11.1px"><span style="color:#8f8f8f">.</span><span style="color:#d9ef7d">then</span><span style="color:#f2c443">(</span><span style="color:#c586c0">()</span><span style="color:#e6e6e6"> </span><span style="color:#8fcf8f">=&gt;</span><span style="color:#e6e6e6"> </span><span style="color:#c586c0">{</span></div></div>
<div class="t" style="left:0;width:36px;text-align:right;top:315.3px;font-family:'Liberation Mono',monospace;font-size:10.5px;color:#7b7b7b">263</div>
<div class="a" style="left:56px;top:312.8px;width:325px;height:18px;overflow:hidden"><div class="t" style="left:105.20px;top:3px;font-family:'Liberation Mono',monospace;font-size:11.1px"><span style="color:#7a7a7a">// 显示复制成功提示</span></div></div>
<div class="t" style="left:0;width:36px;text-align:right;top:331.9px;font-family:'Liberation Mono',monospace;font-size:10.5px;color:#7b7b7b">264</div>
<div class="a" style="left:56px;top:329.4px;width:325px;height:18px;overflow:hidden"><div class="t" style="left:105.20px;top:3px;font-family:'Liberation Mono',monospace;font-size:11.1px"><span style="color:#a69ff6">if</span><span style="color:#e6e6e6"> </span><span style="color:#5aa8f0">(</span><span style="color:#e6e6e6">successElement</span><span style="color:#5aa8f0">)</span><span style="color:#e6e6e6"> </span><span style="color:#5aa8f0">{</span></div></div>
<div class="t" style="left:0;width:36px;text-align:right;top:348.6px;font-family:'Liberation Mono',monospace;font-size:10.5px;color:#7b7b7b">265</div>
<div class="a" style="left:56px;top:346.1px;width:325px;height:18px;overflow:hidden"><div class="t" style="left:118.52px;top:3px;font-family:'Liberation Mono',monospace;font-size:11.1px"><span style="color:#e6e6e6">successElement</span><span style="color:#8f8f8f">.</span><span style="color:#e6e6e6">style</span><span style="color:#8f8f8f">.</span><span style="color:#e6e6e6">display </span><span style="color:#8fcf8f">=</span><span style="color:#e6e6e6"> </span><span style="color:#c8d08c">&quot;block&quot;</span></div></div>
<div class="t" style="left:0;width:36px;text-align:right;top:365.2px;font-family:'Liberation Mono',monospace;font-size:10.5px;color:#7b7b7b">266</div>
<div class="a" style="left:56px;top:362.7px;width:325px;height:18px;overflow:hidden"><div class="t" style="left:118.52px;top:3px;font-family:'Liberation Mono',monospace;font-size:11.1px"><span style="color:#d9ef7d">setTimeout</span><span style="color:#f2c443">(</span><span style="color:#c586c0">()</span><span style="color:#e6e6e6"> </span><span style="color:#8fcf8f">=&gt;</span><span style="color:#e6e6e6"> </span><span style="color:#c586c0">{</span></div></div>
<div class="t" style="left:0;width:36px;text-align:right;top:381.9px;font-family:'Liberation Mono',monospace;font-size:10.5px;color:#7b7b7b">267</div>
<div class="a" style="left:56px;top:379.4px;width:325px;height:18px;overflow:hidden"><div class="t" style="left:131.84px;top:3px;font-family:'Liberation Mono',monospace;font-size:11.1px"><span style="color:#e6e6e6">successElement</span><span style="color:#8f8f8f">.</span><span style="color:#e6e6e6">style</span><span style="color:#8f8f8f">.</span><span style="color:#e6e6e6">display </span><span style="color:#8fcf8f">=</span><span style="color:#e6e6e6"> </span><span style="color:#c8d08c">&quot;none&quot;</span></div></div>
<div class="t" style="left:0;width:36px;text-align:right;top:398.5px;font-family:'Liberation Mono',monospace;font-size:10.5px;color:#7b7b7b">268</div>
<div class="a" style="left:56px;top:396.0px;width:325px;height:18px;overflow:hidden"><div class="t" style="left:118.52px;top:3px;font-family:'Liberation Mono',monospace;font-size:11.1px"><span style="color:#c586c0">}</span><span style="color:#e6e6e6">, </span><span style="color:#9cdcfe">2000</span><span style="color:#f2c443">)</span><span style="color:#e6e6e6">;</span></div></div>
<div class="t" style="left:0;width:36px;text-align:right;top:415.2px;font-family:'Liberation Mono',monospace;font-size:10.5px;color:#7b7b7b">269</div>
<div class="a" style="left:56px;top:412.7px;width:325px;height:18px;overflow:hidden"><div class="t" style="left:105.20px;top:3px;font-family:'Liberation Mono',monospace;font-size:11.1px"><span style="color:#5aa8f0">}</span></div></div>
<div class="t" style="left:0;width:36px;text-align:right;top:431.8px;font-family:'Liberation Mono',monospace;font-size:10.5px;color:#7b7b7b">270</div>
<div class="a" style="left:56px;top:429.3px;width:325px;height:18px;overflow:hidden"><div class="t" style="left:91.88px;top:3px;font-family:'Liberation Mono',monospace;font-size:11.1px"><span style="color:#c586c0">}</span><span style="color:#f2c443">)</span></div></div>
<div class="t" style="left:0;width:36px;text-align:right;top:448.5px;font-family:'Liberation Mono',monospace;font-size:10.5px;color:#d0d0d0">271</div>
<div class="a" style="left:56px;top:446.0px;width:325px;height:18px;overflow:hidden"><div class="t" style="left:91.88px;top:3px;font-family:'Liberation Mono',monospace;font-size:11.1px"><span style="color:#8f8f8f">.</span><span style="color:#d9ef7d">catch</span><span style="color:#f2c443">(</span><span style="color:#c586c0">(</span><span style="color:#e6e6e6">err</span><span style="color:#c586c0">)</span><span style="color:#e6e6e6"> </span><span style="color:#8fcf8f">=&gt;</span><span style="color:#e6e6e6"> </span><span style="color:#c586c0">{</span></div></div>
<div class="t" style="left:0;width:36px;text-align:right;top:465.1px;font-family:'Liberation Mono',monospace;font-size:10.5px;color:#7b7b7b">272</div>
<div class="a" style="left:56px;top:462.6px;width:325px;height:18px;overflow:hidden"><div class="t" style="left:105.20px;top:3px;font-family:'Liberation Mono',monospace;font-size:11.1px"><span style="color:#e6e6e6">console</span><span style="color:#8f8f8f">.</span><span style="color:#d9ef7d">error</span><span style="color:#5aa8f0">(</span><span style="color:#c8d08c">&quot;复制失败:&quot;</span><span style="color:#e6e6e6">, err</span><span style="color:#5aa8f0">)</span><span style="color:#e6e6e6">;</span></div></div>
<div class="t" style="left:0;width:36px;text-align:right;top:481.8px;font-family:'Liberation Mono',monospace;font-size:10.5px;color:#7b7b7b">273</div>
<div class="a" style="left:56px;top:479.3px;width:325px;height:18px;overflow:hidden"><div class="t" style="left:105.20px;top:3px;font-family:'Liberation Mono',monospace;font-size:11.1px"><span style="color:#d9ef7d">alert</span><span style="color:#5aa8f0">(</span><span style="color:#c8d08c">&quot;复制失败，请手动复制&quot;</span><span style="color:#5aa8f0">)</span><span style="color:#e6e6e6">;</span></div></div>
<div class="t" style="left:0;width:36px;text-align:right;top:498.4px;font-family:'Liberation Mono',monospace;font-size:10.5px;color:#7b7b7b">274</div>
<div class="a" style="left:56px;top:495.9px;width:325px;height:18px;overflow:hidden"><div class="t" style="left:91.88px;top:3px;font-family:'Liberation Mono',monospace;font-size:11.1px"><span style="color:#c586c0">}</span><span style="color:#f2c443">)</span><span style="color:#e6e6e6">;</span></div></div>
<div class="t" style="left:0;width:36px;text-align:right;top:515.1px;font-family:'Liberation Mono',monospace;font-size:10.5px;color:#7b7b7b">275</div>
<div class="a" style="left:56px;top:512.6px;width:325px;height:18px;overflow:hidden"><div class="t" style="left:65.24px;top:3px;font-family:'Liberation Mono',monospace;font-size:11.1px"><span style="color:#5aa8f0">}</span><span style="color:#c586c0">)</span><span style="color:#e6e6e6">;</span></div></div>
<div class="t" style="left:0;width:36px;text-align:right;top:531.8px;font-family:'Liberation Mono',monospace;font-size:10.5px;color:#7b7b7b">276</div>
<div class="a" style="left:56px;top:529.2px;width:325px;height:18px;overflow:hidden"><div class="t" style="left:51.92px;top:3px;font-family:'Liberation Mono',monospace;font-size:11.1px"><span style="color:#c586c0">}</span><span style="color:#5aa8f0">)</span><span style="color:#e6e6e6">;</span></div></div>
<div class="t" style="left:0;width:36px;text-align:right;top:548.4px;font-family:'Liberation Mono',monospace;font-size:10.5px;color:#7b7b7b">277</div>
<div class="a" style="left:56px;top:545.9px;width:325px;height:18px;overflow:hidden"><div class="t" style="left:38.60px;top:3px;font-family:'Liberation Mono',monospace;font-size:11.1px"><span style="color:#f2c443">}</span><span style="color:#e6e6e6"> </span><span style="color:#a69ff6">catch</span><span style="color:#e6e6e6"> </span><span style="color:#f2c443">(</span><span style="color:#e6e6e6">error</span><span style="color:#f2c443">)</span><span style="color:#e6e6e6"> </span><span style="color:#f2c443">{</span></div></div>
<div class="a" style="left:0px;top:0px;width:0px;height:0px;background:#000;"></div>
<div class="a" style="left:0;top:0;width:381px;height:82px;background:#1b1b1b"></div>
<div class="t" style="left:0;width:36px;text-align:right;top:1.2px;font-family:'Liberation Mono',monospace;font-size:10.5px;color:#7b7b7b">2</div>
<div class="a" style="left:56px;top:-1.3px;width:325px;height:18px;overflow:hidden"><div class="t" style="left:-28.00px;top:3px;font-family:'Liberation Mono',monospace;font-size:11.1px"><span style="color:#9ea08f">&lt;</span><span style="color:#a69ff6">html</span><span style="color:#e6e6e6"> </span><span style="color:#a69ff6">lang</span><span style="color:#9ea08f">=</span><span style="color:#c8d08c">&quot;zh-CN&quot;</span><span style="color:#9ea08f">&gt;</span></div></div>
<div class="t" style="left:0;width:36px;text-align:right;top:17.8px;font-family:'Liberation Mono',monospace;font-size:10.5px;color:#7b7b7b">116</div>
<div class="a" style="left:56px;top:15.3px;width:325px;height:18px;overflow:hidden"><div class="t" style="left:-14.68px;top:3px;font-family:'Liberation Mono',monospace;font-size:11.1px"><span style="color:#9ea08f">&lt;</span><span style="color:#a69ff6">body</span><span style="color:#9ea08f">&gt;</span></div></div>
<div class="t" style="left:0;width:36px;text-align:right;top:34.5px;font-family:'Liberation Mono',monospace;font-size:10.5px;color:#7b7b7b">150</div>
<div class="a" style="left:56px;top:32.0px;width:325px;height:18px;overflow:hidden"><div class="t" style="left:-1.36px;top:3px;font-family:'Liberation Mono',monospace;font-size:11.1px"><span style="color:#9ea08f">&lt;</span><span style="color:#a69ff6">script</span><span style="color:#9ea08f">&gt;</span></div></div>
<div class="t" style="left:0;width:36px;text-align:right;top:51.1px;font-family:'Liberation Mono',monospace;font-size:10.5px;color:#7b7b7b">151</div>
<div class="a" style="left:56px;top:48.6px;width:325px;height:18px;overflow:hidden"><div class="t" style="left:11.96px;top:3px;font-family:'Liberation Mono',monospace;font-size:11.1px"><span style="color:#e6e6e6">document</span><span style="color:#8f8f8f">.</span><span style="color:#d9ef7d">addEventListener</span><span style="color:#f2c443">(</span><span style="color:#c8d08c">&quot;DOMContentLoaded&quot;</span><span style="color:#e6e6e6">, </span><span style="color:#a69ff6">function</span><span style="color:#e6e6e6"> () {</span></div></div>
<div class="t" style="left:0;width:36px;text-align:right;top:67.8px;font-family:'Liberation Mono',monospace;font-size:10.5px;color:#7b7b7b">164</div>
<div class="a" style="left:56px;top:65.3px;width:325px;height:18px;overflow:hidden"><div class="t" style="left:25.28px;top:3px;font-family:'Liberation Mono',monospace;font-size:11.1px"><span style="color:#e6e6e6">convertBtn</span><span style="color:#8f8f8f">.</span><span style="color:#d9ef7d">addEventListener</span><span style="color:#5aa8f0">(</span><span style="color:#c8d08c">&quot;click&quot;</span><span style="color:#e6e6e6">, </span><span style="color:#a69ff6">function</span><span style="color:#e6e6e6"> () {</span></div></div>
<div class="a" style="left:0;top:82px;width:381px;height:3px;background:linear-gradient(#0e0e0e,rgba(27,27,27,0))"></div>
</div>
<div class="a" style="left:276px;top:31px;width:381px;height:554px;overflow:hidden"><svg style="left:0;top:-31px" width="381" height="600"><path d="M 343.9 342.9 A 69 69 0 1 1 391.7 264.9" fill="none" stroke="#050505" stroke-width="5"/></svg></div>
<div class="a" style="left:657px;top:0px;width:543px;height:12px;background:#0b0b0b;"></div>
<div class="a" style="left:657px;top:0px;width:100px;height:12px;background:#1b1b1b;"></div>
<div class="a" style="left:657px;top:12px;width:543px;height:33px;background:#1b1b1b;"></div>
<svg style="left:671px;top:23px" width="6" height="10"><path d="M5 0.5L1 5L5 9.5" fill="none" stroke="#a0a0a0" stroke-width="1"/></svg>
<svg style="left:696px;top:23px" width="6" height="10"><path d="M1 0.5L5 5L1 9.5" fill="none" stroke="#a0a0a0" stroke-width="1"/></svg>
<svg style="left:720px;top:23px" width="11" height="11"><g fill="none" stroke="#e8e8e8" stroke-width="1.1"><path d="M9.5 4.5A4.5 4.5 0 1 1 8.2 2"/><path d="M9.5 0.5V4.5H5.5"/></g></svg>
<div class="t" style="left:746px;top:22.5px;font-size:11px;color:#ececec;">https://sjppvn.csb.app/</div>
<svg style="left:1100px;top:22px" width="12" height="12"><g fill="#a8a8a8"><path d="M8.5 0.5L9.4 3.1L12 4L9.4 4.9L8.5 7.5L7.6 4.9L5 4L7.6 3.1Z"/><path d="M3.2 5L4 7.4L6.4 8.2L4 9L3.2 11.4L2.4 9L0 8.2L2.4 7.4Z"/></g></svg>
<svg style="left:1125px;top:22px" width="12" height="12"><g fill="none" stroke="#a8a8a8" stroke-width="0.9"><circle cx="6" cy="6" r="3.8"/><path d="M6 0V3.5M6 8.5V12M0 6H3.5M8.5 6H12"/></g></svg>
<svg style="left:1151px;top:21px" width="13" height="13"><g fill="none" stroke="#e8e8e8" stroke-width="1"><rect x="0.5" y="2" width="10" height="10" rx="1.5"/><path d="M2.8 4.5L5.2 6.8L2.8 9M5.2 10.2H8.2"/></g><circle cx="11" cy="1.8" r="1.8" fill="#e8a3a8"/></svg>
<svg style="left:1177px;top:22px" width="13" height="12"><g fill="none" stroke="#e8e8e8" stroke-width="1"><path d="M4 3.8V0.5H12.5V6.5H8.5"/><rect x="0.5" y="4.8" width="8" height="6.5" rx="1"/></g></svg>
<div class="a" style="left:657px;top:44px;width:543px;height:541px;background:#fff;"></div>
<div class="a" style="left:657px;top:44px;width:543px;height:541px;overflow:hidden">
<div class="t" style="left:25px;top:-7.2px;font-size:10.5px;color:#222;font-family:'Liberation Mono',monospace">文件類型不支持，請上傳正確的地址證明文件    不支持的文件类型請重新上傳以確認存款</div>
<div class="t" style="left:25px;top:6.2px;font-size:10.5px;color:#1a1a1a;font-family:'Liberation Mono',monospace">文姓名與賬戶認證英文姓名不一致，請更換符合的賬戶進行存款</div>
<div class="t" style="left:25px;top:19.6px;font-size:10.5px;color:#1a1a1a;font-family:'Liberation Mono',monospace">kyc.reject_reason.jumio_0001    Please try again or contact support.ds@osl.com.</div>
<div class="t" style="left:25px;top:33.0px;font-size:10.5px;color:#1a1a1a;font-family:'Liberation Mono',monospace">扫描失败，请重新认证或邮件联系support.ds@osl.com.    掃描失敗，請重新認證或郵件聯絡</div>
<div class="t" style="left:25px;top:46.5px;font-size:10.5px;color:#1a1a1a;font-family:'Liberation Mono',monospace">support.ds@osl.com.</div>
<div class="t" style="left:25px;top:59.8px;font-size:10.5px;color:#1a1a1a;font-family:'Liberation Mono',monospace">kyc.reject_reason.jumio_0002    Please try again or contact support.ds@osl.com.</div>
<div class="t" style="left:25px;top:73.2px;font-size:10.5px;color:#1a1a1a;font-family:'Liberation Mono',monospace">扫描失败，请重新认证或邮件联系support.ds@osl.com.    掃描失敗，請重新認證或郵件聯絡</div>
<div class="t" style="left:25px;top:86.7px;font-size:10.5px;color:#1a1a1a;font-family:'Liberation Mono',monospace">support.ds@osl.com.</div>
<div class="t" style="left:25px;top:100.0px;font-size:10.5px;color:#1a1a1a;font-family:'Liberation Mono',monospace">kyc.reject_reason.unsupported_poa_document      Unsupported POA document types</div>
<div class="t" style="left:25px;top:113.5px;font-size:10.5px;color:#1a1a1a;font-family:'Liberation Mono',monospace">不支持的地址证明类型        不支持的地址證明類型</div>
</div>
<div class="a" style="left:673px;top:44px;width:527px;height:132px;background:transparent;border:1px solid #cfcfcf;border-top:none;border-radius:0 0 3px 3px"></div>
<div class="a" style="left:1192px;top:146px;width:5px;height:153px;background:#7a7a7a;border-radius:3px"></div>
<div class="a" style="left:673px;top:199px;width:49px;height:33px;background:#5cb060;border-radius:3px"></div>
<div class="t" style="left:687px;top:210.0px;font-size:12px;color:#fff;">转换</div>
<div class="a" style="left:673px;top:249px;width:511px;height:400px;background:#f8f8f8;border:1px solid #dedede;border-radius:4px"></div>
<div class="t" style="left:686px;top:281.1px;font-size:12.5px;color:#111;font-weight:bold">预览:</div>
<div class="a" style="left:686px;top:315px;width:486px;height:300px;background:#f9f9f9;border:1px solid #dedede"></div>
<div class="a" style="left:687px;top:316px;width:484px;height:37px;background:#ececec;"></div>
<div class="a" style="left:686px;top:353px;width:486px;height:1px;background:#dedede;"></div>
<div class="t" style="left:695px;top:329.5px;font-size:11px;color:#111;font-weight:bold">英文 (en.json)</div>
<div class="a" style="left:1120px;top:325px;width:35px;height:20px;background:#5cb060;border-radius:2px"></div>
<div class="t" style="left:1126px;top:330.2px;font-size:9.5px;color:#fff;">复制</div>
<div class="a" style="left:657px;top:354px;width:527px;height:231px;overflow:hidden">
<div class="t" style="left:38px;top:20.1px;font-size:10.95px;color:#1a1a1a;font-family:'Liberation Mono',monospace">{</div>
<div class="t" style="left:38px;top:35.8px;font-size:10.95px;color:#1a1a1a;font-family:'Liberation Mono',monospace">    &quot;kyc.signed_documents.address_placeholder&quot;: &quot;If approved, the</div>
<div class="t" style="left:38px;top:51.4px;font-size:10.95px;color:#1a1a1a;font-family:'Liberation Mono',monospace">address information provided in your document will be automatically</div>
<div class="t" style="left:38px;top:67.1px;font-size:10.95px;color:#1a1a1a;font-family:'Liberation Mono',monospace">populated&quot;,</div>
<div class="t" style="left:38px;top:82.7px;font-size:10.95px;color:#1a1a1a;font-family:'Liberation Mono',monospace">    &quot;kyc.reject_reason.poa_document_expired&quot;: &quot;Please upload full</div>
<div class="t" style="left:38px;top:98.4px;font-size:10.95px;color:#1a1a1a;font-family:'Liberation Mono',monospace">page proof of address document and release date is within 3 months.&quot;,</div>
<div class="t" style="left:38px;top:114.0px;font-size:10.95px;color:#1a1a1a;font-family:'Liberation Mono',monospace">    &quot;kyc.reject_reason.name_id_not_match&quot;: &quot;Mismatch between English</div>
<div class="t" style="left:38px;top:129.7px;font-size:10.95px;color:#1a1a1a;font-family:'Liberation Mono',monospace">name and ID document name&quot;,</div>
<div class="t" style="left:38px;top:145.3px;font-size:10.95px;color:#1a1a1a;font-family:'Liberation Mono',monospace">    &quot;kyc.reject_reason.deposit_amount_not_enough&quot;: &quot;The amount you</div>
<div class="t" style="left:38px;top:161.0px;font-size:10.95px;color:#1a1a1a;font-family:'Liberation Mono',monospace">deposit does not satisfy HK$10,000 or US$1,300. It has been returned</div>
<div class="t" style="left:38px;top:176.6px;font-size:10.95px;color:#1a1a1a;font-family:'Liberation Mono',monospace">to you in the original way. Please make a new deposit.&quot;,</div>
<div class="t" style="left:38px;top:192.3px;font-size:10.95px;color:#1a1a1a;font-family:'Liberation Mono',monospace">    &quot;kyc.reject_reason.deposit_name_not_match&quot;: &quot;Name does not match</div>
<div class="t" style="left:38px;top:207.9px;font-size:10.95px;color:#1a1a1a;font-family:'Liberation Mono',monospace">your English name. Please choose a bank account that matches your</div>
<div class="t" style="left:38px;top:223.6px;font-size:10.95px;color:#1a1a1a;font-family:'Liberation Mono',monospace">English name to deposit.&quot;,</div>
</div>
<div class="a" style="left:0px;top:585px;width:1200px;height:17px;background:#0e0e0e;"></div>
<div class="a" style="left:0px;top:585px;width:170px;height:17px;background:#dcee6b;"></div>
<div class="t" style="left:21.6px;top:588.5px;font-size:10px;color:#111;">CodeSandbox - Sandbox (Web)</div>
<svg style="left:8px;top:588px" width="9" height="10"><path d="M0.5 9.5L4 6M8.5 0.5L5 4M5 6.5L8.5 9.5" fill="none" stroke="#111" stroke-width="0.9"/></svg>
<svg style="left:188px;top:588px" width="10" height="10"><g fill="none" stroke="#a8a8a8" stroke-width="0.9"><circle cx="5" cy="5" r="4.4"/><path d="M3.2 3.2L6.8 6.8M6.8 3.2L3.2 6.8"/></g></svg>
<div class="t" style="left:201px;top:588.5px;font-size:10px;color:#a8a8a8;">0</div>
<svg style="left:211px;top:588px" width="10" height="10"><g fill="none" stroke="#a8a8a8" stroke-width="0.9" stroke-linejoin="round"><path d="M5 0.8L9.5 9.2H0.5Z"/><path d="M5 3.8V6.3M5 7.3V8"/></g></svg>
<div class="t" style="left:225px;top:588.5px;font-size:10px;color:#a8a8a8;">0</div>
<svg style="left:244px;top:588px" width="10" height="10"><g fill="none" stroke="#a8a8a8" stroke-width="0.8"><path d="M2 1Q0.5 3.5 2 6M8 1Q9.5 3.5 8 6M3.3 2Q2.6 3.5 3.3 5M6.7 2Q7.4 3.5 6.7 5M5 4L2.8 9.8M5 4L7.2 9.8M3.5 7.8H6.5"/></g></svg>
<div class="t" style="left:257px;top:588.5px;font-size:10px;color:#a8a8a8;">1</div>
<svg style="left:665px;top:588px" width="10" height="10"><g fill="none" stroke="#a8a8a8" stroke-width="0.8"><path d="M2 1Q0.5 3.5 2 6M8 1Q9.5 3.5 8 6M3.3 2Q2.6 3.5 3.3 5M6.7 2Q7.4 3.5 6.7 5M5 4L2.8 9.8M5 4L7.2 9.8M3.5 7.8H6.5"/></g></svg>
<div class="t" style="left:677px;top:588.5px;font-size:10px;color:#a8a8a8;">Open preview</div>
<div class="t" style="left:752px;top:588.4px;font-size:10.2px;color:#a8a8a8;">Ln 271, Col 30 (3 selected)</div>
<div class="t" style="left:888px;top:588.4px;font-size:10.2px;color:#a8a8a8;">Spaces: 2</div>
<div class="t" style="left:945px;top:588.4px;font-size:10.2px;color:#a8a8a8;">UTF-8</div>
<div class="t" style="left:988px;top:588.4px;font-size:10.2px;color:#a8a8a8;">LF</div>
<div class="t" style="left:1010px;top:588.4px;font-size:10.2px;color:#a8a8a8;">HTML</div>
<div class="t" style="left:1050.6px;top:588.4px;font-size:10.2px;color:#a8a8a8;">Layout: U.S.</div>
<div class="t" style="left:1117.8px;top:588.4px;font-size:10.2px;color:#a8a8a8;">&#x2713; Prettier</div>
<svg style="left:1177px;top:588px" width="10" height="11"><path d="M2 7.5V4.5A3 3 0 0 1 8 4.5V7.5L9 8.5H1Z M4 9.5A1 1 0 0 0 6 9.5" fill="none" stroke="#a8a8a8" stroke-width="0.9"/></svg>
<!--/VID-->
</div>
<div class="t" style="left:2210px;top:1707px;font-size:32px;color:#111">观看上方视频了解详细使用步骤。</div>
<div class="a" style="left:2180px;top:1850px;width:1444px;height:103px;border:2px solid #dcdcdc;border-bottom:none;border-radius:8px 8px 0 0;background:#fff"></div>
<div class="t" style="left:2202px;top:1880px;font-size:26.67px;font-family:'Liberation Mono',monospace;color:#777">在此粘贴内容<span style="letter-spacing:2px">...</span></div>
<!-- TOP BAR -->
<div class="a" style="left:30px;top:26px;width:36px;height:36px;border:3px solid #e2e2e2;border-radius:2px"></div>
<svg style="left:81px;top:40px" width="14" height="9"><path d="M1 1 L7 7 L13 1" fill="none" stroke="#cfcfcf" stroke-width="2.2"/></svg>
<div class="pill" style="left:136px;top:24px;width:410px;height:40px"></div>
<svg style="left:156px;top:32px" width="26" height="26"><path d="M23.3 13.3 A11.3 11.3 0 1 0 11 23.6" fill="none" stroke="#ececec" stroke-width="2.3"/></svg>
<div class="t" style="left:192px;top:31px;font-size:26px;color:#dcdcdc">Installing a new editor version</div>
<div class="pill" style="left:1441px;top:24px;width:162px;height:40px"></div>
<svg style="left:1458px;top:33px" width="24" height="24"><g fill="none" stroke="#d0d0d0" stroke-width="2" stroke-linejoin="round"><path d="M12 1.5 L21.5 6.5 L21.5 17 L12 22.5 L2.5 17 L2.5 6.5 Z"/><path d="M2.5 6.5 L12 12 L21.5 6.5 M12 12 L12 22.5"/></g></svg>
<div class="t" style="left:1489px;top:31px;font-size:25px;color:#e4e4e4">Sandbox</div>
<div class="t" style="left:1622px;top:30px;font-size:27.5px;color:#f0f0f0">2411363896</div>
<div class="t" style="left:1785px;top:30px;font-size:27.5px;color:#bdbdbd">/</div>
<div class="t" style="left:1805px;top:30px;font-size:27.5px;color:#f0f0f0">Drafts</div>
<div class="t" style="left:1889px;top:30px;font-size:27.5px;color:#bdbdbd">/</div>
<div class="t" style="left:1910px;top:30px;font-size:28.2px;color:#f0f0f0">translate-tools</div>
<svg style="left:2113px;top:42px" width="14" height="9"><path d="M1 1 L7 7 L13 1" fill="none" stroke="#d0d0d0" stroke-width="2.2"/></svg>
<div class="a" style="left:3025px;top:18px;width:52px;height:52px;border-radius:50%;background:#e63323"></div>
<div class="t" style="left:3039px;top:31px;font-size:28px;font-weight:bold;color:#0a0a0a">A</div>
<div class="btn" style="left:3125px;top:16px;width:143px;height:56px"></div>
<div class="t" style="left:3142px;top:30px;font-size:26.5px;color:#a8a8a8">VS Code</div>
<div class="btn" style="left:3284px;top:16px;width:107px;height:56px"></div>
<div class="t" style="left:3301px;top:30px;font-size:26.2px;color:#a8a8a8">Share</div>
<div class="btn" style="left:3407px;top:16px;width:161px;height:56px;background:#222"></div>
<div class="a" style="left:3524px;top:18px;width:2px;height:52px;background:#3a3a3a"></div>
<div class="t" style="left:3424px;top:30px;font-size:26.5px;color:#f2f2f2">Sign In</div>
<svg style="left:3539px;top:40px" width="14" height="9"><path d="M1 1 L7 7 L13 1" fill="none" stroke="#e0e0e0" stroke-width="2.2"/></svg>

</body></html>
